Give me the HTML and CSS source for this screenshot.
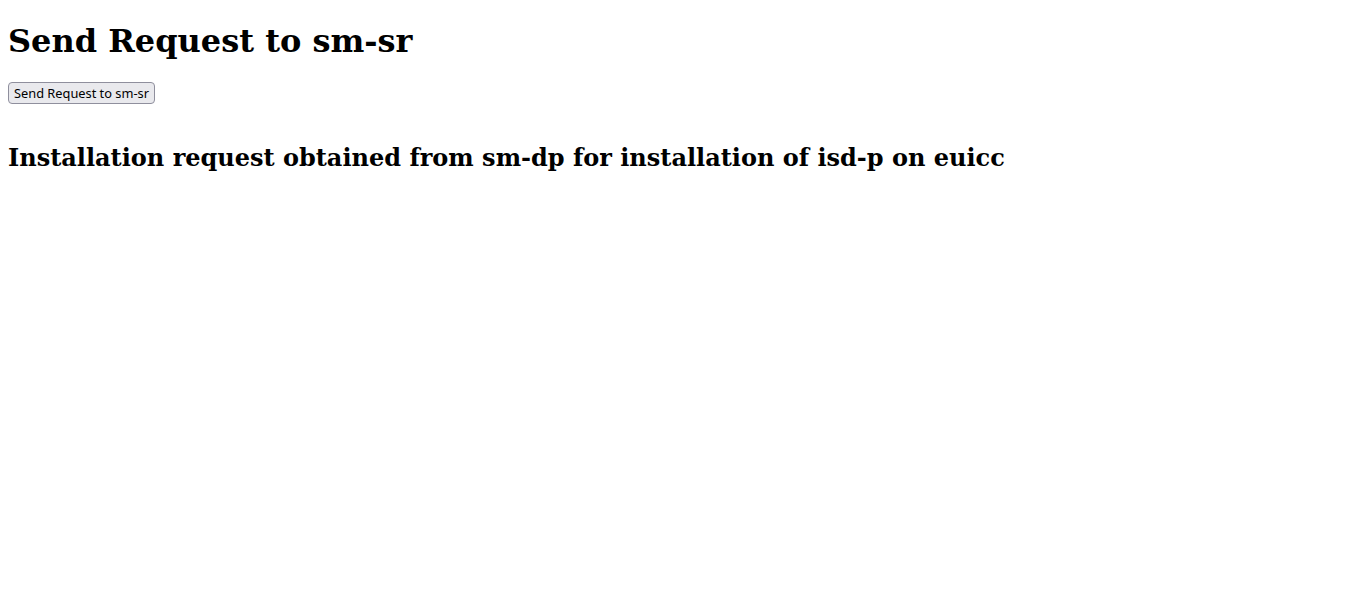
FILE: index.html
```html
<!DOCTYPE html>
<html>
<head>
<meta charset="utf-8">
<title>Send Request to sm-sr</title>
<link rel="stylesheet" href="styles.css">
</head>
<body class="page">
<h1 class="title">Send Request to sm-sr</h1>
<form class="form">
<button type="button" class="send-btn">Send Request to sm-sr</button>
</form>
<br>
<h2 class="subtitle">Installation request obtained from sm-dp for installation of isd-p on euicc</h2>
</body>
</html>
```
FILE: styles.css
```css
.page {
  margin: 8px;
  font-family: "DejaVu Serif", serif;
  color: #000;
  background: #fff;
}
.title {
  font-size: 32px;
  font-weight: bold;
  margin: 14.44px 0 21.44px;
}
.form {
  margin: 0;
}
.send-btn {
  font-family: "Noto Sans", sans-serif;
  font-size: 12.8px;
  line-height: 18px;
  padding: 1px 5px;
  border: 1px solid #8f8f9d;
  border-radius: 4px;
  background: #e9e9ed;
  color: #000;
}
.subtitle {
  font-size: 24px;
  font-weight: bold;
  margin: 19.92px 0;
}
```
